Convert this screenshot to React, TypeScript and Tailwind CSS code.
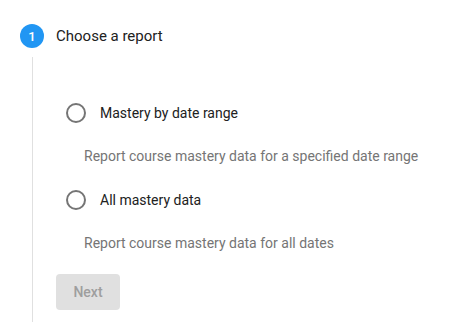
export default function App() {
  const options = [
    { label: 'Mastery by date range', description: 'Report course mastery data for a specified date range' },
    { label: 'All mastery data', description: 'Report course mastery data for all dates' },
  ];

  return (
    <div className="w-[456px] h-[322px] bg-white overflow-hidden font-['Roboto',sans-serif]">
      {/* Step header */}
      <div className="flex items-center pt-[24px] pl-[20px] h-[48px]">
        <div className="w-[24px] h-[24px] rounded-full bg-[#2196f3] flex items-center justify-center text-white text-[13px] font-medium leading-none">
          1
        </div>
        <span className="ml-[12px] text-[15px] text-[#212121]">Choose a report</span>
      </div>

      {/* Step content */}
      <div className="ml-[32px] mt-[9px] border-l border-[#e0e0e0] pl-[23px] h-[265px]">
        <div className="pt-[44px]">
          {options.map((opt) => (
            <div key={opt.label}>
              <label className="flex items-center h-[24px] ml-[8px] cursor-pointer">
                <svg width="24" height="24" viewBox="0 0 24 24">
                  <circle cx="12" cy="12" r="9" fill="none" stroke="#757575" strokeWidth="2" />
                </svg>
                <span className="ml-[12px] text-[14px] text-[#212121]">{opt.label}</span>
              </label>
              <p className="ml-[28px] mt-[21px] mb-[22px] text-[14px] leading-[20px] text-[#757575]">
                {opt.description}
              </p>
            </div>
          ))}
        </div>
        <button
          disabled
          className="mt-[-1px] w-[64px] h-[36px] rounded-[4px] bg-[#e0e0e0] text-[#9e9e9e] text-[14px] font-medium"
        >
          Next
        </button>
      </div>
    </div>
  );
}
